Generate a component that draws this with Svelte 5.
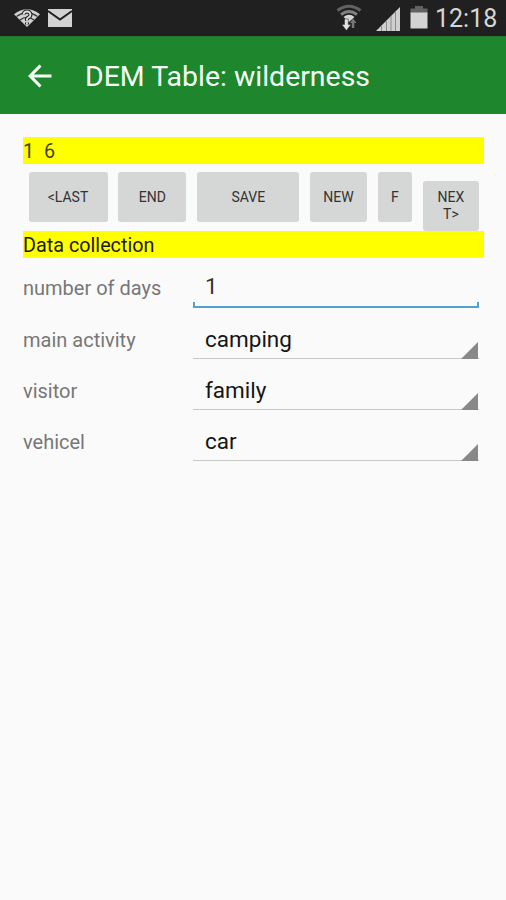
<script>
  const buttons = [
    { label: '<LAST', width: 79 },
    { label: 'END', width: 68 },
    { label: 'SAVE', width: 102 },
    { label: 'NEW', width: 56.5 },
    { label: 'F', width: 34.5 },
    { label: 'NEXT>', width: 56, wrapped: true }
  ];
  const fields = [
    { label: 'main activity', value: 'camping' },
    { label: 'visitor', value: 'family' },
    { label: 'vehicel', value: 'car' }
  ];
</script>

<div class="screen">
  <div class="status">
    <svg class="wifi-unknown" width="28" height="20" viewBox="0 0 28 20">
      <path d="M1 6.2Q14-3.8 27 6.2L14 19Z" fill="#d0d0d0" />
      <path d="M3.500 8.500Q14 .8 24.500 8.500M7 12Q14 6.800 21 12" fill="none" stroke="#333" stroke-width="1.200" />
      <path d="M10.500 6.500Q11 3.500 14 3.500T17.500 6.500Q17.500 8.500 15.500 9.500T14 12.500M14 14.500V16.500" fill="none" stroke="#222" stroke-width="4" />
      <path d="M10.500 6.500Q11 3.500 14 3.500T17.500 6.500Q17.500 8.500 15.500 9.500T14 12.500M14 14.500V16.500" fill="none" stroke="#ddd" stroke-width="1.900" />
    </svg>
    <svg class="mail" width="26" height="20" viewBox="0 0 26 20">
      <path d="M1 1H25V19H1Z" fill="#d2d2d2" />
      <path d="M1 3L13 11.500L25 3" fill="none" stroke="#202020" stroke-width="2" />
    </svg>
    <span class="spacer"></span>
    <svg class="wifi" width="26" height="28" viewBox="0 0 26 28">
      <g fill="none" stroke="#626262" stroke-width="3">
        <path d="M1.500 6.500Q13-2 24.500 6.500" />
        <path d="M5 10.500Q13 4.500 21 10.500" stroke="#808080" />
      </g>
      <path d="M7.500 13Q13 8.500 18.500 13L13 18Z" fill="#d5d5d5" />
      <path d="M8.500 15H12.300V20.500H15L10.400 26.500L5.800 20.500H8.500Z" fill="#e2e2e2" stroke="#202020" stroke-width=".5" />
      <path d="M15.800 24V19H14L17 14.500L20.500 19H18.300V24Z" fill="#777" />
    </svg>
    <svg class="signal" width="26" height="26" viewBox="0 0 26 26">
      <path d="M1 25L25 1V25Z" fill="#cfcfcf" />
      <path d="M6.500 19V25M11.500 14V25M16 10V25M20.500 5V25" stroke="#8b8b8b" stroke-width="1" />
    </svg>
    <svg class="battery" width="18" height="23" viewBox="0 0 18 23">
      <path d="M5 0H13V2.500H17.500V8H.5V2.500H5Z" fill="#626262" />
      <path d="M.5 6.500H17.500V22.500H.5Z" fill="#d3d3d3" />
    </svg>
    <span class="clock">12:18</span>
  </div>

  <header>
    <svg width="24" height="24" viewBox="0 0 24 24">
      <path d="M12.500 1.500L2.200 12L12.500 22.500M2.200 12H23.500" fill="none" stroke="#f5fff5" stroke-width="3.100" />
    </svg>
    <h1>DEM Table: wilderness</h1>
  </header>

  <main>
    <div class="band count">1&nbsp; 6</div>
    <div class="buttons">
      {#each buttons as b}
        <button class:wrapped={b.wrapped} style:width="{b.width}px">
          {#if b.wrapped}NEX<br />T&gt;{:else}{b.label}{/if}
        </button>
      {/each}
    </div>
    <div class="band"><span class="title">Data collection</span></div>

    <div class="row first">
      <span class="label days">number of days</span>
      <div class="input">1</div>
    </div>
    {#each fields as f}
      <div class="row">
        <span class="label">{f.label}</span>
        <div class="select">
          <span>{f.value}</span>
          <svg width="17" height="17" viewBox="0 0 17 17"><path d="M0 17L17 0V17Z" fill="#888" /></svg>
        </div>
      </div>
    {/each}
  </main>
</div>

<style>
  .screen {
    width: 506px;
    height: 900px;
    overflow: hidden;
    background: #fafafa;
    font-family: Roboto, sans-serif;
  }
  .status {
    display: flex;
    height: 36px;
    box-sizing: border-box;
    background: #202020;
    padding: 0 8px 0 13px;
  }
  .status svg { flex: none; }
  .wifi-unknown { margin-top: 8px; }
  .mail { margin: 8px 0 0 6px; }
  .spacer { flex: 1; }
  .wifi { margin: 4px 13px 0 0; }
  .signal { margin: 6px 9px 0 0; }
  .battery { margin: 6px 7px 0 0; }
  .clock {
    width: 63px;
    font-size: 25px;
    line-height: 38px;
    color: #d6d6d6;
    white-space: nowrap;
  }
  header {
    display: flex;
    align-items: center;
    height: 77.500px;
    background: #1e862c;
    border-top: 1px solid #23732d;
    box-sizing: border-box;
    padding: 1px 0 0 28px;
  }
  h1 {
    margin: 2px 0 0 33px;
    font-size: 28.450px;
    font-weight: 400;
    line-height: 34px;
    color: #f5fff5;
    white-space: nowrap;
  }
  main { padding: 23.500px 22px 0 23px; }
  .band {
    height: 26.500px;
    background: #ff0;
    color: #1b1b00;
    font-size: 19.800px;
    line-height: 29.500px;
    white-space: nowrap;
  }
  .count { color: #444400; }
  .buttons {
    display: flex;
    align-items: flex-start;
    justify-content: space-between;
    height: 67.500px;
    box-sizing: border-box;
    padding: 8.500px 5px 0 5.500px;
  }
  button {
    height: 50px;
    flex: none;
    padding: 0;
    border: 0;
    border-radius: 3px;
    background: #d5d7d6;
    color: #333;
    font: 14px/17px Roboto, sans-serif;
  }
  .wrapped { margin-top: 9px; }
  .row {
    display: flex;
    height: 51.300px;
    padding-right: 5.500px;
  }
  .row.first { height: 50px; }
  .label {
    width: 170px;
    flex: none;
    padding-top: 18px;
    font-size: 20px;
    line-height: 28px;
    color: #777;
    white-space: nowrap;
  }
  .days { padding-top: 16px; }
  .input, .select {
    position: relative;
    flex: 1;
    box-sizing: border-box;
    padding-left: 12px;
    font-size: 22.500px;
    line-height: 28px;
    color: #151515;
  }
  .input {
    height: 50px;
    padding-top: 14px;
    color: #333;
  }
  .input::after {
    content: '';
    position: absolute;
    left: 0;
    right: 0;
    bottom: 0;
    height: 4px;
    border: 2px solid #4fa3cb;
    border-top: 0;
  }
  .select {
    padding-top: 17px;
    border-bottom: 1.500px solid #c8c8c8;
  }
  .select svg {
    position: absolute;
    right: 0.500px;
    bottom: -1px;
  }
</style>
